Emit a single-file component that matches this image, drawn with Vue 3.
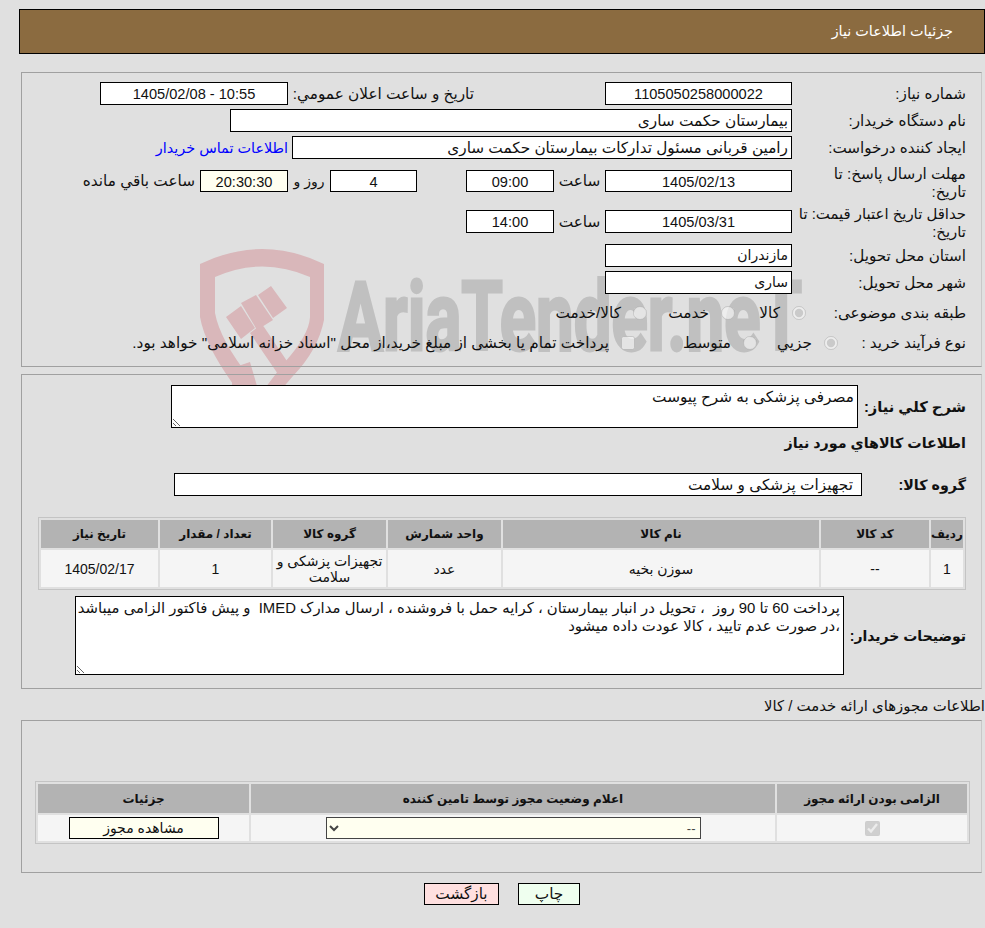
<script setup>
const goodsHead = ['ردیف', 'کد کالا', 'نام کالا', 'واحد شمارش', 'گروه کالا', 'تعداد / مقدار', 'تاریخ نیاز']
const goodsRow = ['1', '--', 'سوزن بخیه', 'عدد', 'تجهیزات پزشکی و سلامت', '1', '1405/02/17']
const note = 'پرداخت 60 تا 90 روز  ، تحویل در انبار بیمارستان ، کرایه حمل با فروشنده ، ارسال مدارک IMED  و پیش فاکتور الزامی میباشد\n،در صورت عدم تایید ، کالا عودت داده میشود'
</script>

<template>
  <div class="page">
    <svg class="mark" width="985" height="430" viewBox="0 0 985 430" aria-hidden="true">
      <path class="shield" d="M200 264 Q262 234 324 264 V320 Q318 350 293 376 L262 412 L233 384 Q205 345 200 317 Z M215 277 V313 Q220 340 250 378 L262 392 L285 362 Q309 335 310 317 V277 Q262 256 215 277 Z" fill-rule="evenodd"/>
      <path class="shield" d="M226 317 L241 306 L255 328 L241 339 Z M241 303 L256 295 L273 320 L257 330 Z M258 295 L271 286 L287 308 L273 318 Z M250 333 L262 324 L293 370 L282 380 Z"/>
      <path class="shield" d="M232 368 L250 362 L257 386 L232 386 Z"/>
      <text class="brand" x="338" y="350" textLength="464" lengthAdjust="spacingAndGlyphs">AriaTender.neT</text>
    </svg>

    <header class="header"><span>جزئیات اطلاعات نیاز</span></header>

    <section class="box info">
      <div class="row h23">
        <label class="lab down">شماره نیاز:</label>
        <div class="field w187 center">1105050258000022</div>
        <span class="public">تاریخ و ساعت اعلان عمومي:</span>
        <div class="field w188 center">10:55 - 1405/02/08</div>
      </div>
      <div class="row h23 gap">
        <label class="lab down">نام دستگاه خریدار:</label>
        <div class="field w562">بیمارستان حکمت ساری</div>
      </div>
      <div class="row h23 gap">
        <label class="lab down">ایجاد کننده درخواست:</label>
        <div class="field w500">رامین  قربانی مسئول تدارکات بیمارستان حکمت ساری</div>
        <a class="link">اطلاعات تماس خریدار</a>
      </div>
      <div class="row h36 gap">
        <label class="lab two">مهلت ارسال پاسخ: تا<br>تاریخ:</label>
        <div class="field w187 center short">1405/02/13</div>
        <span class="unit">ساعت</span>
        <div class="field w88 center short">09:00</div>
        <div class="field w87 center short days">4</div>
        <span class="unit w42">روز و</span>
        <div class="field w88 center short ivory">20:30:30</div>
        <span class="remain">ساعت باقي مانده</span>
      </div>
      <div class="row h37 gap">
        <label class="lab two tight">حداقل تاریخ اعتبار قیمت: تا<br>تاریخ:</label>
        <div class="field w187 center">1405/03/31</div>
        <span class="unit">ساعت</span>
        <div class="field w88 center">14:00</div>
      </div>
      <div class="row h23 gap">
        <label class="lab">استان محل تحویل:</label>
        <div class="field w187 small">مازندران</div>
      </div>
      <div class="row h23 gap">
        <label class="lab">شهر محل تحویل:</label>
        <div class="field w187 small">ساری</div>
      </div>
      <div class="row h30 gap">
        <label class="lab lab160">طبقه بندی موضوعی:</label>
        <div class="choice c71"><input type="radio" name="kind" checked disabled><span>کالا</span></div>
        <div class="choice c88"><input type="radio" name="kind" disabled><span>خدمت</span></div>
        <div class="choice"><input type="radio" name="kind" disabled><span>کالا/خدمت</span></div>
      </div>
      <div class="row h30">
        <label class="lab lab128">نوع فرآیند خرید :</label>
        <div class="choice c81"><input type="radio" name="proc" checked disabled><span>جزيي</span></div>
        <div class="choice c122"><input type="radio" name="proc" disabled><span>متوسط</span></div>
        <div class="choice"><input type="checkbox" disabled><span>پرداخت تمام یا بخشی از مبلغ خرید،از محل "اسناد خزانه اسلامی" خواهد بود.</span></div>
      </div>
    </section>

    <section class="box goods">
      <div class="row">
        <label class="lab bold l108">شرح کلي نیاز:</label>
        <textarea class="area a1" readonly>مصرفی پزشکی به شرح پیوست</textarea>
      </div>
      <h3 class="bold heading">اطلاعات کالاهاي مورد نیاز</h3>
      <div class="row group">
        <label class="lab bold l104">گروه کالا:</label>
        <div class="field w688">تجهیزات پزشکی و سلامت</div>
      </div>
      <table class="grid g1">
        <colgroup>
          <col class="k1"><col class="k2"><col class="k3"><col class="k4"><col class="k5"><col class="k6"><col class="k7">
        </colgroup>
        <thead><tr><th v-for="h in goodsHead" :key="h">{{ h }}</th></tr></thead>
        <tbody><tr><td v-for="(c, i) in goodsRow" :key="i">{{ c }}</td></tr></tbody>
      </table>
      <div class="row notes">
        <label class="lab bold l122">توضیحات خریدار:</label>
        <textarea class="area a2" readonly :value="note"></textarea>
      </div>
    </section>

    <div class="title3">اطلاعات مجوزهای ارائه خدمت / کالا</div>

    <section class="box permits">
      <table class="grid g2">
        <colgroup><col class="p1"><col class="p2"><col class="p3"></colgroup>
        <thead><tr><th>الزامی بودن ارائه مجوز</th><th>اعلام وضعیت مجوز توسط تامین کننده</th><th>جزئیات</th></tr></thead>
        <tbody>
          <tr>
            <td><input class="check" type="checkbox" checked disabled></td>
            <td><select class="sel"><option>--</option></select></td>
            <td><button class="btn view" type="button">مشاهده مجوز</button></td>
          </tr>
        </tbody>
      </table>
    </section>

    <div class="actions">
      <button class="btn print" type="button">چاپ</button>
      <button class="btn back" type="button">بازگشت</button>
    </div>
  </div>
</template>

<style>
html, body { margin: 0; background: #e0e0e0; }
</style>

<style scoped>
.page {
  position: relative;
  width: 985px;
  height: 928px;
  overflow: hidden;
  direction: rtl;
  background: #e0e0e0;
  color: #111;
  font-family: "Liberation Sans", "DejaVu Sans", sans-serif;
  font-size: 15.3px;
}
.mark { position: absolute; left: 0; top: 0; }
.shield { fill: #d9b7ba; }
.brand { fill: #c0c0c0; stroke: #c0c0c0; stroke-width: 3px; font-family: Roboto, sans-serif; font-weight: 700; font-size: 96px; direction: ltr; }
.header, .box, .title3, .actions { position: relative; }
.header {
  box-sizing: border-box;
  height: 45px;
  margin: 9px 0 0 19px;
  padding: 13px 31px 0 0;
  background: #8b6b40;
  border: 1px solid #000;
  color: #fff;
  font-size: 14.4px;
}
.box {
  box-sizing: border-box;
  width: 961px;
  margin-right: 3px;
  padding-right: 15px;
  border: 1px solid #a0a0a0;
  border-right-color: #c8c8c8;
}
.info { margin-top: 18px; height: 295px; padding-top: 9px; }
.goods { margin-top: 7px; height: 315px; padding-top: 10px; }
.permits { margin-top: 4px; height: 153px; padding-top: 60px; padding-right: 11px; }
.row { display: flex; align-items: center; }
.gap { margin-top: 4px; }
.h23 { height: 23px; }
.h30 { height: 30px; }
.h36 { height: 36px; }
.h37 { height: 37px; }
.lab { width: 174px; flex: none; line-height: 18px; font-size: 15.2px; white-space: nowrap; }
.lab160 { width: 160px; }
.lab128 { width: 128px; }
.two { padding-top: 3px; }
.tight { font-size: 14.9px; }
.down { padding-top: 1px; }
.field {
  box-sizing: border-box;
  height: 23px;
  flex: none;
  padding: 0 3px;
  line-height: 21px;
  background: #fff;
  border: 1px solid #000;
  white-space: pre;
}
.short { height: 22px; line-height: 20px; }
.center { padding-top: 1px; text-align: center; font-size: 14.6px; }
.small { font-size: 14px; }
.ivory { background: #fffff0; }
.w187 { width: 187px; }
.w188 { width: 188px; }
.w562 { width: 562px; }
.w500 { width: 500px; }
.w88 { width: 88px; }
.w87 { width: 87px; }
.w688 { width: 688px; padding-right: 8px; }
.days { margin-right: 49px; }
.public { width: 317px; flex: none; box-sizing: border-box; padding-right: 131px; white-space: nowrap; }
.link { margin-right: 4px; color: #0000ff; font-size: 14.4px; }
.unit { width: 51px; flex: none; text-align: center; }
.w42 { width: 42px; font-size: 14px; }
.remain { margin-right: 5px; }
.choice { display: flex; align-items: center; gap: 12px; flex: none; }
.choice input { width: 14px; height: 14px; margin: 0; flex: none; }
.c71 { width: 71px; }
.c88 { width: 88px; }
.c81 { width: 81px; }
.c122 { width: 122px; }
.bold { font-weight: 700; font-size: 14.3px; }
.l108 { width: 108px; font-size: 14.7px; }
.l104 { width: 104px; }
.l122 { width: 122px; font-size: 14px; }
.area {
  display: block;
  box-sizing: border-box;
  margin: 0;
  padding: 2px 3px 2px 2px;
  background: #fff;
  border: 1px solid #000;
  border-radius: 0;
  outline: none;
  color: #111;
  font: inherit;
  line-height: 18px;
  flex: none;
}
.a1 { width: 687px; height: 43px; }
.a2 { width: 769px; height: 79px; font-size: 14.9px; white-space: pre; overflow: hidden; }
.heading { height: 30px; margin: 0; line-height: 30px; }
.group { margin-top: 15px; }
.notes { margin-top: 6px; }
.grid {
  table-layout: fixed;
  border-collapse: separate;
  border-spacing: 2px;
  border: 1px solid #c4c4c4;
  font-size: 12px;
}
.grid th { height: 28px; padding: 0; background: #b3b3b3; font-weight: 700; text-align: center; }
.grid td { padding: 0 2px; background: #f5f5f5; font-size: 14px; line-height: 16px; text-align: center; }
.g1 { width: 928px; margin-top: 21px; }
.g1 td { height: 37px; }
.k1 { width: 32px; }
.k2 { width: 108px; }
.k3 { width: 316px; }
.k4 { width: 113px; }
.k5 { width: 113px; }
.k6 { width: 111px; }
.k7 { width: 117px; }
.g2 { width: 935px; }
.g2 th { height: 29px; }
.g2 td { height: 26px; }
.p1 { width: 190px; }
.p2 { width: 524px; }
.p3 { width: 211px; }
.check { display: block; width: 15px; height: 15px; margin: 0 auto; }
.sel {
  display: block;
  box-sizing: border-box;
  width: 375px;
  height: 22px;
  margin: 0 auto;
  background-color: #fffff0;
  border: 1px solid #444;
  border-radius: 0;
  color: #444;
  font: inherit;
  font-size: 13px;
}
.btn {
  box-sizing: border-box;
  height: 22px;
  margin: 0;
  padding: 0;
  border: 1px solid #000;
  border-radius: 0;
  color: #111;
  font: inherit;
}
.view { display: block; width: 150px; margin: 0 auto; background: #fffff0; }
.title3 { margin-top: 8px; height: 19px; line-height: 19px; font-size: 14.9px; white-space: nowrap; }
.actions { display: flex; justify-content: center; gap: 19px; margin-top: 10px; padding-left: 19px; }
.print { width: 62px; background: #efffef; }
.back { width: 75px; background: #ffe0e0; }
</style>
